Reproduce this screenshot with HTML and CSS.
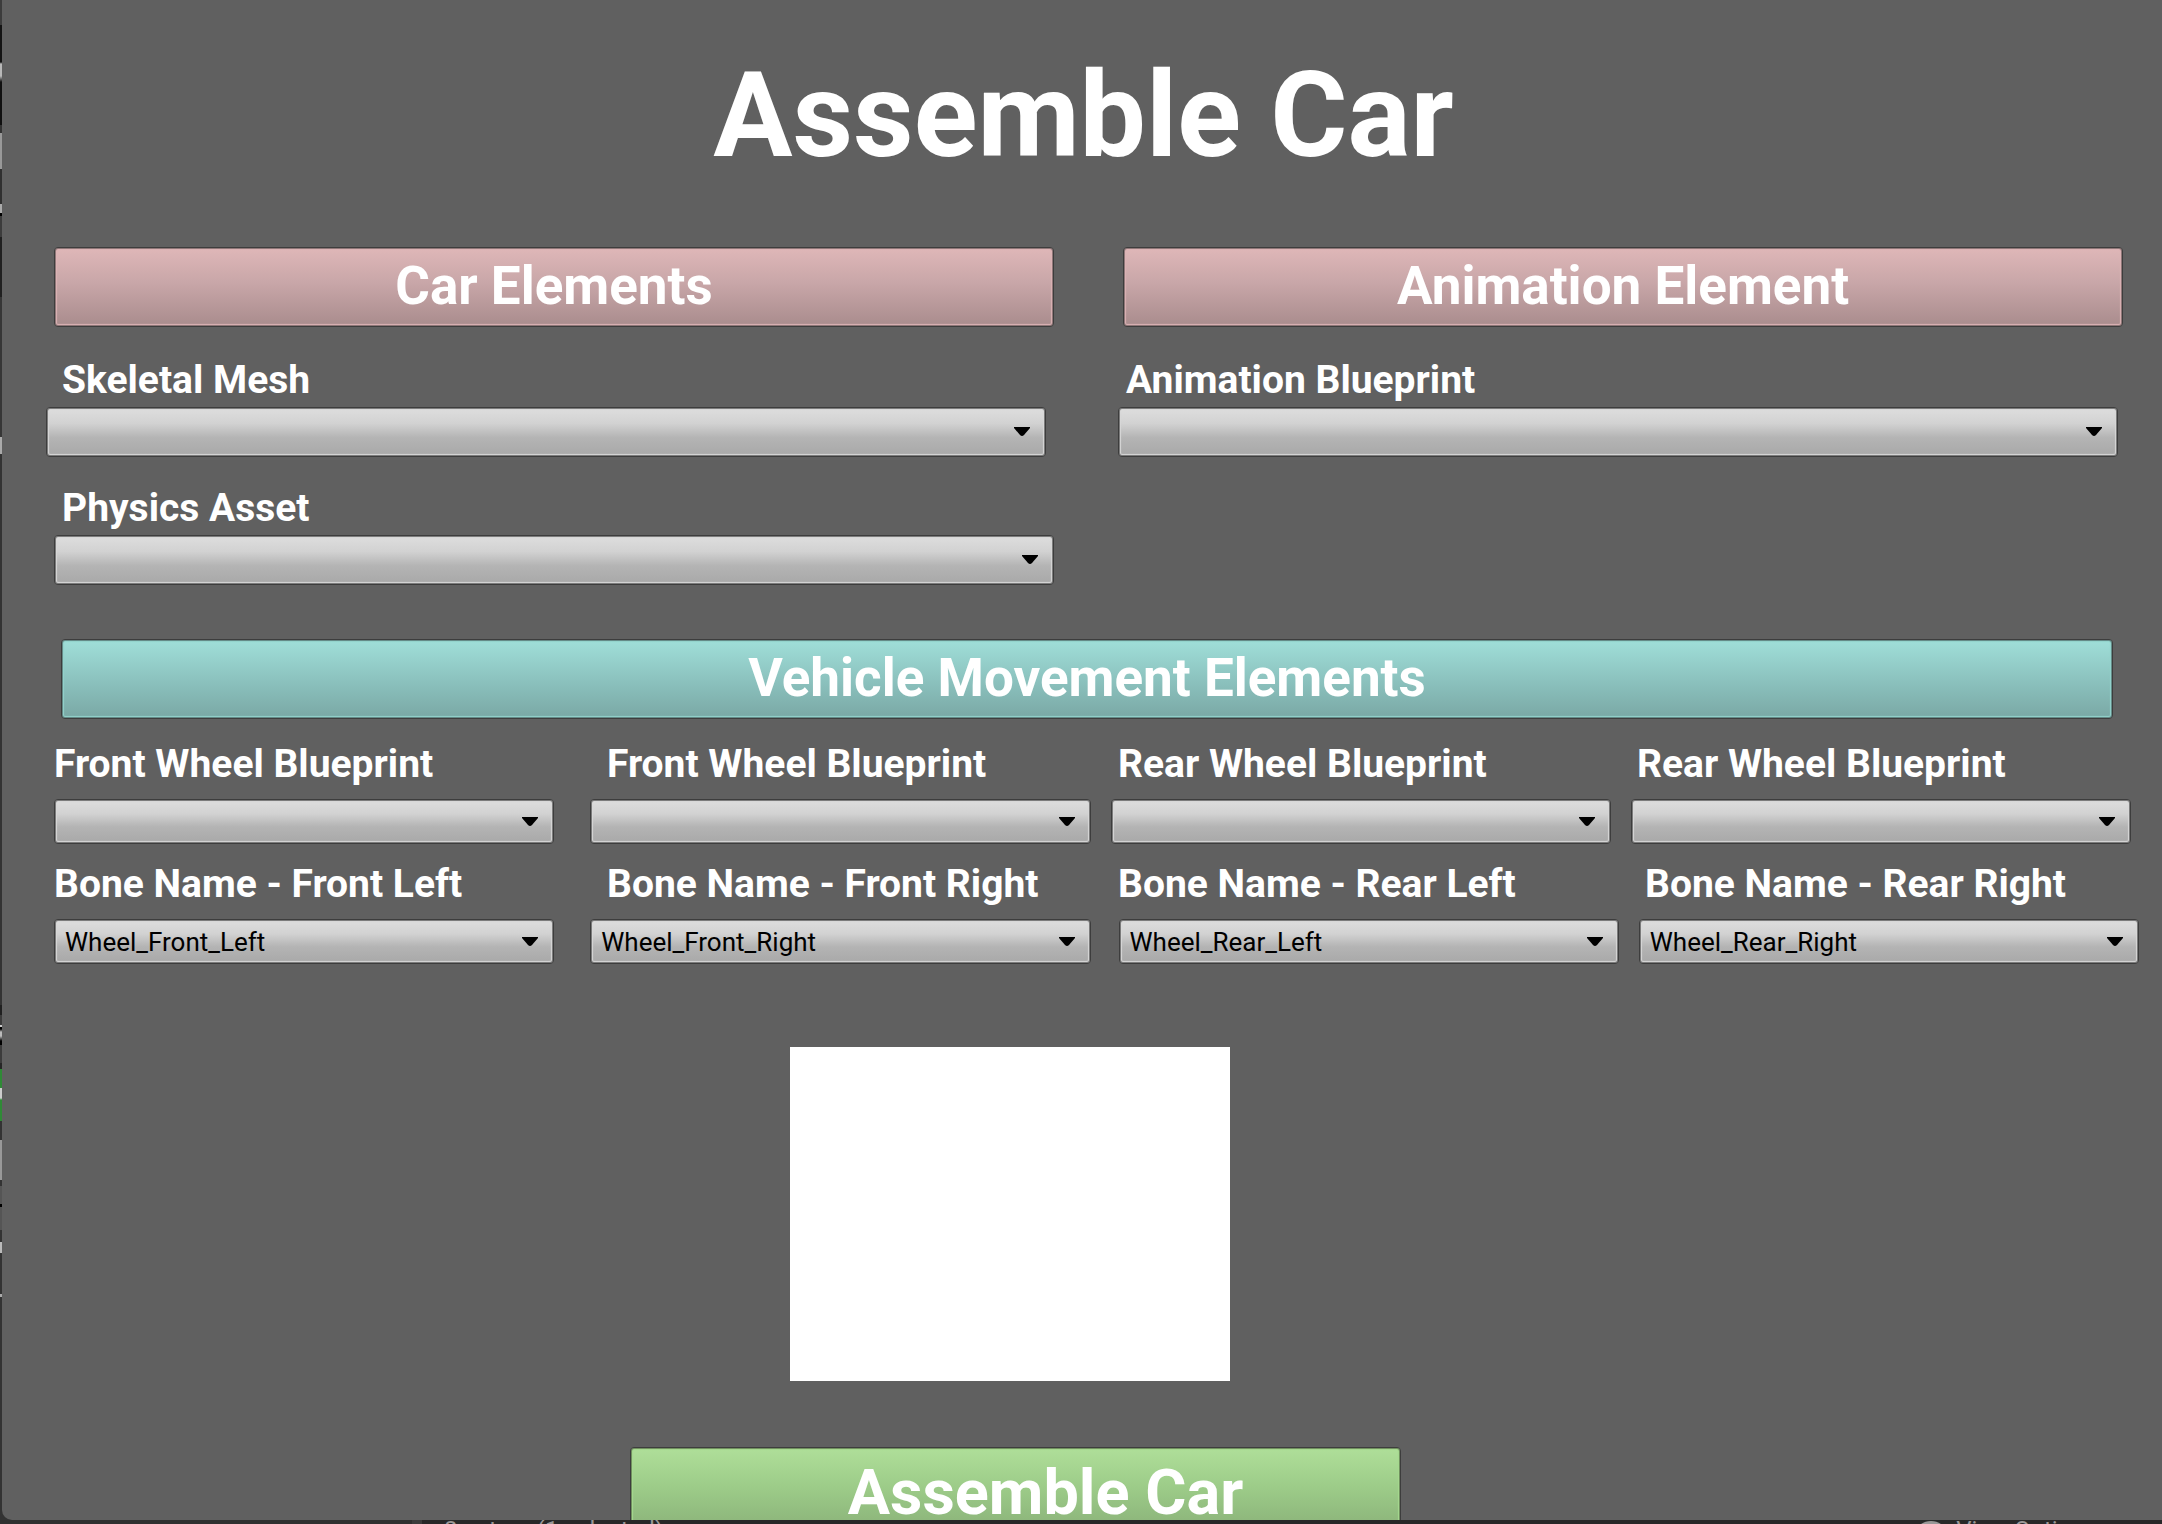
FILE: index.html
```html
<!DOCTYPE html>
<html lang="en">
<head>
<meta charset="utf-8">
<title>Assemble Car</title>
<link rel="stylesheet" href="styles.css">
</head>
<body>
<main class="dialog">
  <h1 class="title">Assemble Car</h1>

  <div class="headers">
    <h2 class="banner banner-pink">Car Elements</h2>
    <h2 class="banner banner-pink">Animation Element</h2>
  </div>
  <div class="labels labels-assets">
    <label for="mesh">Skeletal Mesh</label>
    <label for="anim">Animation Blueprint</label>
  </div>
  <div class="assets">
    <select class="combo" id="mesh"><option></option></select>
    <select class="combo" id="anim"><option></option></select>
  </div>
  <div class="labels labels-physics">
    <label for="physics">Physics Asset</label>
  </div>
  <div class="physics">
    <select class="combo" id="physics"><option></option></select>
  </div>

  <h2 class="banner banner-teal">Vehicle Movement Elements</h2>

  <div class="labels labels-wheels">
    <label for="wheel-fl">Front Wheel Blueprint</label>
    <label for="wheel-fr">Front Wheel Blueprint</label>
    <label for="wheel-rl">Rear Wheel Blueprint</label>
    <label for="wheel-rr">Rear Wheel Blueprint</label>
  </div>
  <div class="wheels">
    <select class="combo combo-small" id="wheel-fl"><option></option></select>
    <select class="combo combo-small" id="wheel-fr"><option></option></select>
    <select class="combo combo-small" id="wheel-rl"><option></option></select>
    <select class="combo combo-small" id="wheel-rr"><option></option></select>
  </div>
  <div class="labels labels-bones">
    <label for="bone-fl">Bone Name - Front Left</label>
    <label for="bone-fr">Bone Name - Front Right</label>
    <label for="bone-rl">Bone Name - Rear Left</label>
    <label for="bone-rr">Bone Name - Rear Right</label>
  </div>
  <div class="wheels bones">
    <select class="combo combo-small" id="bone-fl"><option>Wheel_Front_Left</option></select>
    <select class="combo combo-small" id="bone-fr"><option>Wheel_Front_Right</option></select>
    <select class="combo combo-small" id="bone-rl"><option>Wheel_Rear_Left</option></select>
    <select class="combo combo-small" id="bone-rr"><option>Wheel_Rear_Right</option></select>
  </div>

  <div class="preview-row"><div class="preview"></div></div>
  <div class="action-row"><button class="assemble" type="button">Assemble Car</button></div>
</main>
<footer class="editor-bar">
  <span class="status">8 actors (1 selected)</span>
  <span class="view-options"><svg width="30" height="22" viewBox="0 0 30 22" aria-hidden="true"><ellipse cx="15" cy="11" rx="14" ry="10" fill="#9a9898"/></svg>View Options</span>
</footer>
</body>
</html>
```

FILE: styles.css
```css
* { box-sizing: border-box; }

body {
  margin: 0;
  height: 100vh;
  overflow: hidden;
  font-family: Roboto, "Liberation Sans", sans-serif;
  color: #fff;
  /* edge of the editor that shows beside the dialog */
  background: linear-gradient(#3c3c3c 0 25px, #141414 25px 62px, #b8b8b8 64px 76px, #101010 82px 125px,
    #333 125px 133px, #999 133px 169px, #303030 169px 204px, #aaa 204px 213px, #000 213px 216px,
    #3c3c3c 216px 237px, #202020 237px 297px, #363636 297px 437px, #aaa 437px 454px, #333 454px 1005px,
    #202020 1005px 1015px, #3c3c3c 1015px 1025px, #ccc 1025px 1027px, #000 1027px 1029px, #bbb 1032px 1036px,
    #000 1041px 1045px, #3c3c3c 1045px 1063px, #262626 1063px 1069px, #2f8a36 1069px 1088px, #ccc 1088px 1098px,
    #2f8a36 1100px 1121px, #333 1121px 1140px, #999 1140px 1180px, #333 1180px 1186px, #555 1186px 1204px,
    #000 1204px 1207px, #555 1207px 1230px, #333 1230px 1242px, #bbb 1242px 1253px, #333 1253px 1294px,
    #aaa 1294px 1297px, #333 1297px);
}

.dialog {
  display: flex;
  flex-direction: column;
  height: calc(100vh - 4px);
  margin-left: 2px;
  overflow: hidden;
  background: #606060;
  border-bottom-left-radius: 10px;
}
.dialog > * { flex-shrink: 0; }

.title {
  margin: 47px 0 62px;
  padding-left: 3px;
  font-size: 118px;
  line-height: 138px;
  text-align: center;
}

.headers,
.assets,
.physics {
  display: grid;
  grid-template-columns: 1fr 1fr;
}
.headers, .physics { column-gap: 69px; padding: 0 39px 0 52px; }
.assets { column-gap: 72px; padding: 0 44px 0 44px; }

.banner {
  height: 80px;
  margin: 0;
  padding: 5px 4px 4px;
  border: 1px solid #3d3d3d;
  border-radius: 4px;
  font-size: 53px;
  line-height: 66px;
  text-align: center;
}
.banner-pink {
  background: linear-gradient(#dfb7b8, #c8a6a8 45%, #a98c8d);
  box-shadow: inset 0 0 0 1px #8f7778, inset 0 0 1px 2px #dcb3b5;
}
.banner-teal {
  margin: 54px 49px 0 59px;
  background: linear-gradient(#a0dfd9, #8cc3bf 50%, #7aa8a5);
  box-shadow: inset 0 0 0 1px #658b88, inset 0 0 1px 2px #93d3cc;
}

.labels {
  display: grid;
  font-size: 39px;
  font-weight: 700;
  line-height: 50px;
  white-space: nowrap;
}
.labels-assets { grid-template-columns: 1064fr 997fr; padding: 28px 39px 2px 60px; }
.labels-physics { padding: 26px 39px 2px 60px; }
.labels-wheels { grid-template-columns: 553fr 511fr 519fr 490fr; padding: 20px 35px 10px 52px; }
.labels-bones { grid-template-columns: 553fr 511fr 527fr 482fr; padding: 15px 35px 10px 52px; }

.combo {
  appearance: none;
  width: 100%;
  min-width: 0;
  height: 50px;
  padding: 0 40px 0 10px;
  border: 1px solid #3d3d3d;
  border-radius: 4px;
  background:
    url("data:image/svg+xml,%3Csvg xmlns='http://www.w3.org/2000/svg' width='16' height='10'%3E%3Cpath d='M0 0H16V1L10 8Q8 10 6 8L0 1Z'/%3E%3C/svg%3E") no-repeat right 15px center,
    linear-gradient(#dedede, #d2d2d2 32%, #b4b4b4 62%, #a8a8a8);
  box-shadow: inset 0 0 0 1px #7c7c7c, inset 0 0 1px 2px #d8d8d8;
  color: #000;
  font: 400 26px/30px Roboto, "Liberation Sans", sans-serif;
}
.combo-small { height: 45px; }

.wheels {
  display: flex;
  gap: 20px;
  padding: 0 31px 0 52px;
}
.wheels .combo { flex: 1; }
.wheels .combo:nth-child(2) { margin-left: 16px; }
.bones { padding-right: 23px; }
.bones .combo:nth-child(3) { margin-left: 8px; }

.preview-row {
  display: flex;
  justify-content: center;
  padding: 83px 144px 66px 0;
}
.preview { width: 440px; height: 334px; background: #fff; }

.action-row {
  display: flex;
  justify-content: center;
  padding-right: 133px;
}
.assemble {
  width: 771px;
  height: 92px;
  padding: 0 0 0 60px;
  border: 1px solid #3d3d3d;
  border-radius: 4px;
  background: linear-gradient(#afdf99, #9ccb88 45%, #87ad76);
  box-shadow: inset 0 0 0 1px #71905f, inset 0 0 1px 2px #a6d990;
  color: #fff;
  font: 700 63px/72px Roboto, "Liberation Sans", sans-serif;
}

/* top sliver of the editor's status bar below the dialog */
.editor-bar {
  display: flex;
  justify-content: space-between;
  height: 4px;
  padding: 0 65px 0 444px;
  overflow: hidden;
  background: linear-gradient(90deg, #303030 412px, #3c3c3c 412px 422px, #282828 422px);
  color: #9a9898;
  font-size: 24px;
  line-height: 20px;
}
.view-options { display: flex; gap: 10px; }
```
